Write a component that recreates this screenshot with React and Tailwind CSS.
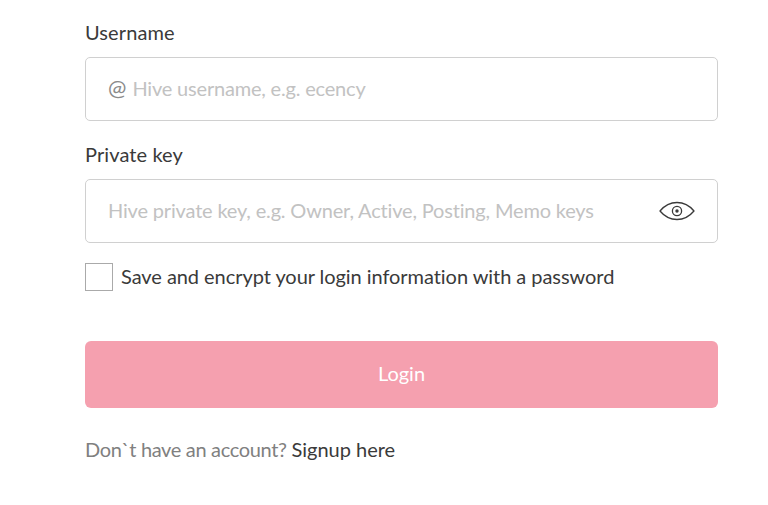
import { useState } from 'react'

function EyeIcon() {
  return (
    <svg className="h-[22px] w-[36px] text-[#3a3a3a]" viewBox="0 0 36 22" fill="none" stroke="currentColor" strokeWidth="1.300">
      <path d="M1 11C6 5 11.5 2.500 18 2.500S30 5 35 11c-5 6-10.500 8.500-17 8.500S6 17 1 11z" strokeLinejoin="round" />
      <circle cx="18" cy="11" r="4.600" />
      <circle cx="18" cy="11" r="1.700" fill="currentColor" stroke="none" />
    </svg>
  )
}

export default function App() {
  const [username, setUsername] = useState('')
  const [privateKey, setPrivateKey] = useState('')

  return (
    <div className="min-h-[505px] bg-white pl-[85px] pr-[50px] pt-[17px] font-['Lato',sans-serif] text-[20px] leading-[30px] text-[#3a3a3a]">
      {/* Username */}
      <label className="mb-[10px] block tracking-[0.1px]">Username</label>
      <div className="mb-[18px] flex h-[64px] items-center rounded-[5px] border border-[#d0d0d0] pb-[2px] pl-[22px] pr-[23px]">
        <span className="mr-[6px] text-[22px] text-[#8a8a8a]">@</span>
        <input
          value={username}
          onChange={(e) => setUsername(e.target.value)}
          placeholder="Hive username, e.g. ecency"
          className="min-w-0 flex-1 tracking-[-0.19px] outline-none placeholder:text-[#c2c2c2]"
        />
      </div>

      {/* Private key */}
      <label className="mb-[10px] block tracking-[0.1px]">Private key</label>
      <div className="mb-[18px] flex h-[64px] items-center rounded-[5px] border border-[#d0d0d0] pl-[22px] pr-[22px]">
        <input
          value={privateKey}
          onChange={(e) => setPrivateKey(e.target.value)}
          placeholder="Hive private key, e.g. Owner, Active, Posting, Memo keys"
          className="mb-[2px] min-w-0 flex-1 tracking-[-0.17px] outline-none placeholder:text-[#c2c2c2]"
        />
        <EyeIcon />
      </div>

      {/* Remember */}
      <label className="mb-[48px] flex items-center gap-[8px]">
        <span className="h-[28px] w-[28px] border border-[#aaaaaa] bg-white" />
        <span className="pb-[2px] tracking-[-0.055px]">Save and encrypt your login information with a password</span>
      </label>

      <button className="mb-[26px] block h-[67px] w-full rounded-[6px] bg-[#f5a0af] pb-[3px] text-white">
        Login
      </button>

      <p className="tracking-[-0.33px] text-[#808080]">
        Don`t have an account? <a className="tracking-[-0.02px] text-[#3a3a3a]">Signup here</a>
      </p>
    </div>
  )
}
